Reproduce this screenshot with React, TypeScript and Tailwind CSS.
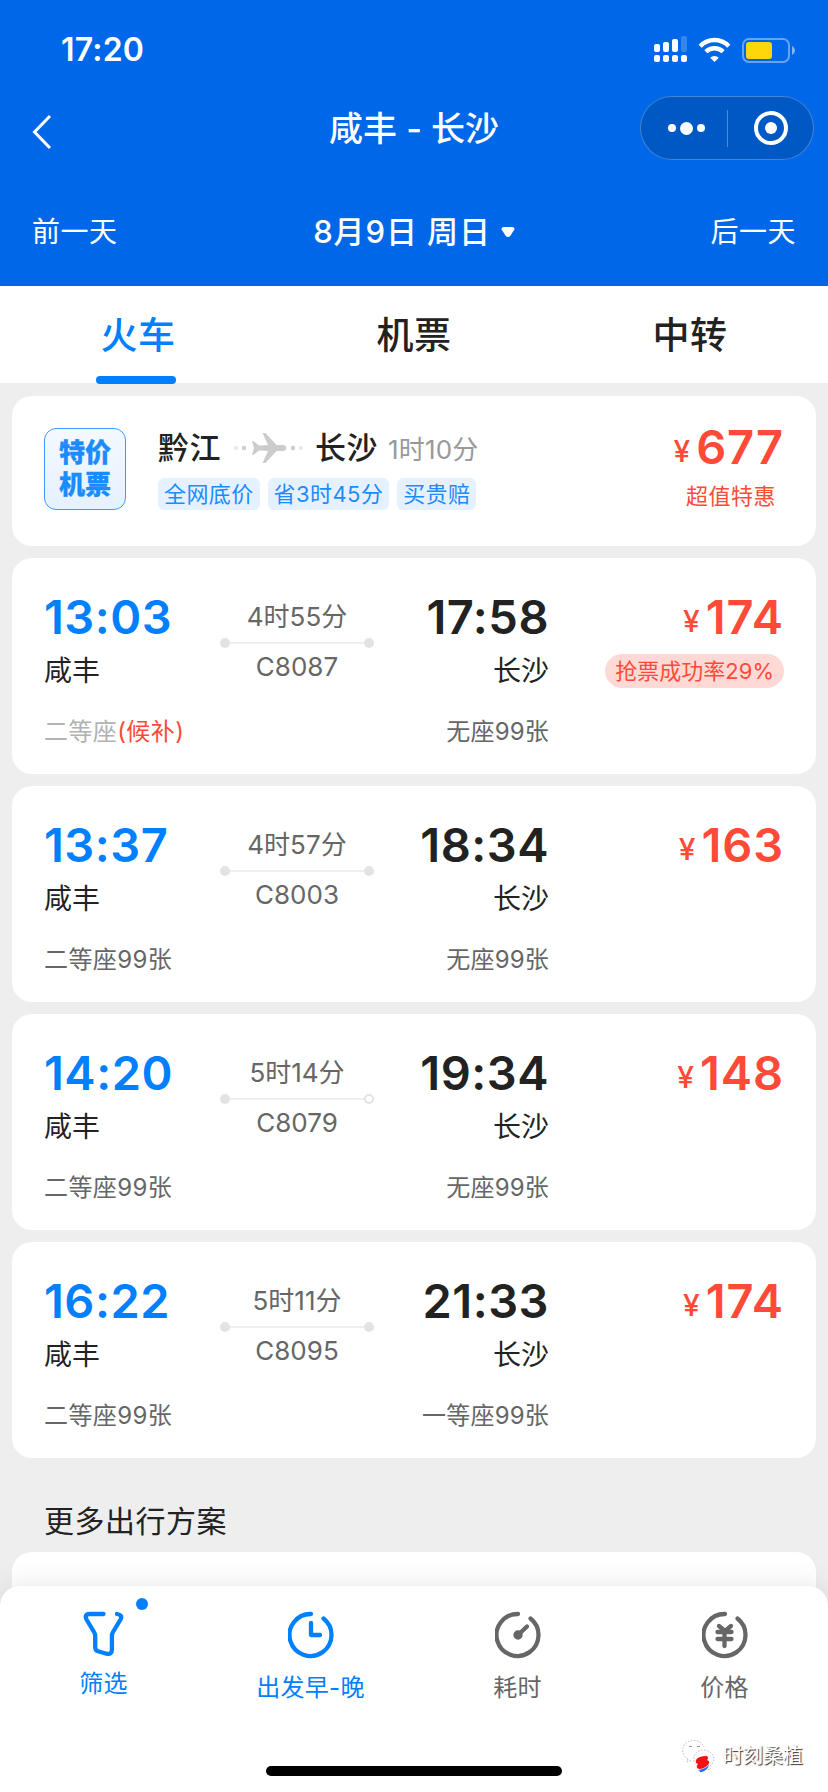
import { type ReactNode } from "react";
import clsx from "clsx";

type Train = {
  no: string;
  depart: string;
  arrive: string;
  from: string;
  to: string;
  duration: string;
  price: number;
  seat: ReactNode;
  extraSeat: string;
  successRate?: string;
  passing?: boolean;
};

const trains: Train[] = [
  {
    no: "C8087",
    depart: "13:03",
    arrive: "17:58",
    from: "咸丰",
    to: "长沙",
    duration: "4时55分",
    price: 174,
    seat: (
      <>
        <span className="text-[#b2b2b2]">二等座</span>
        <span className="text-[#ff4a38]">(候补)</span>
      </>
    ),
    extraSeat: "无座99张",
    successRate: "抢票成功率29%",
  },
  {
    no: "C8003",
    depart: "13:37",
    arrive: "18:34",
    from: "咸丰",
    to: "长沙",
    duration: "4时57分",
    price: 163,
    seat: "二等座99张",
    extraSeat: "无座99张",
  },
  {
    no: "C8079",
    depart: "14:20",
    arrive: "19:34",
    from: "咸丰",
    to: "长沙",
    duration: "5时14分",
    price: 148,
    seat: "二等座99张",
    extraSeat: "无座99张",
    passing: true,
  },
  {
    no: "C8095",
    depart: "16:22",
    arrive: "21:33",
    from: "咸丰",
    to: "长沙",
    duration: "5时11分",
    price: 174,
    seat: "二等座99张",
    extraSeat: "一等座99张",
  },
];

const tags = ["全网底价", "省3时45分", "买贵赔"];

function StatusIcons() {
  return (
    <svg width="144" height="30" viewBox="0 0 144 30" fill="#fff">
      {/* dual sim signal */}
      <rect x="1" y="9" width="6" height="8" rx="2" />
      <rect x="10" y="7" width="6" height="10" rx="2" />
      <rect x="19" y="4" width="6" height="13" rx="2" />
      <rect x="28" y="1" width="6" height="16" rx="2" fillOpacity="0.2" />
      <rect x="1" y="20" width="6" height="7" rx="2" />
      <rect x="10" y="20" width="6" height="7" rx="2" />
      <rect x="19" y="20" width="6" height="7" rx="2" />
      <rect x="28" y="20" width="6" height="7" rx="2" />
      {/* wifi */}
      <g fill="none" stroke="#fff" strokeWidth="4.4">
        <path d="M47.2 11.2a19.6 19.6 0 0 1 28.6 0" />
        <path d="M52.9 16.8a12.2 12.2 0 0 1 17.2 0" />
      </g>
      <path d="M61.5 27l-4.3-4.3a6.2 6.2 0 0 1 8.6 0z" />
      {/* battery */}
      <rect
        x="90"
        y="4"
        width="46"
        height="23"
        rx="6"
        fill="none"
        stroke="#fff"
        strokeOpacity="0.4"
        strokeWidth="2"
      />
      <rect x="93" y="7" width="26" height="17" rx="3" fill="#ffd60a" />
      <path d="M139 11c4 2 4 7 0 9z" fillOpacity="0.5" />
    </svg>
  );
}

function Header() {
  return (
    <header className="flex h-[286px] flex-col bg-[#0068e8] text-white">
      <div className="flex h-[96px] items-center justify-between pt-1 pr-[31px] pl-[61px]">
        <span className="text-[32px] font-semibold tracking-[0.2px]">
          17:20
        </span>
        <StatusIcons />
      </div>
      <div className="grid h-16 grid-cols-3 items-center">
        <svg className="mt-[7px] ml-8" width="22" height="36" fill="none">
          <path d="M18 2 2.5 18 18 34" stroke="#fff" strokeWidth="3" />
        </svg>
        <h1 className="mt-[2px] text-center text-[34px] leading-none font-medium whitespace-nowrap">
          咸丰 - 长沙
        </h1>
        <div className="mr-[14px] flex h-16 w-[174px] items-center justify-self-end rounded-full border border-white/25 bg-[#0058c5]">
          <div className="flex w-[86px] items-center justify-center gap-1 pl-1">
            <i className="size-2 rounded-full bg-white" />
            <i className="size-[13px] rounded-full bg-white" />
            <i className="size-2 rounded-full bg-white" />
          </div>
          <div className="h-[37px] w-px bg-white/30" />
          <div className="flex flex-1 justify-center">
            <div className="flex size-[34px] items-center justify-center rounded-full border-4 border-white">
              <i className="size-3 rounded-full bg-white" />
            </div>
          </div>
        </div>
      </div>
      <div className="grid flex-1 grid-cols-3 items-center px-8 pt-[18px] text-[28px]">
        <span className="tracking-[0.5px]">前一天</span>
        <span className="flex items-center justify-center gap-[10px] text-[31px] font-medium tracking-[0.9px] whitespace-nowrap">
          8月9日 周日
          <svg width="14" height="12" fill="#fff">
            <path d="M3 1h8q3 0 2.4 2.500L9.500 9.500Q7 12.500 4.500 9.500L.6 3.500Q0 1 3 1z" />
          </svg>
        </span>
        <span className="text-right tracking-[0.5px]">后一天</span>
      </div>
    </header>
  );
}

function Tabs() {
  return (
    <nav className="grid h-[97px] grid-cols-3 bg-white text-[37px] font-medium tracking-[0.5px] text-[#222]">
      {["火车", "机票", "中转"].map((tab, i) => (
        <div key={tab} className="flex flex-col items-center">
          <span
            className={clsx(
              "flex h-[90px] shrink-0 items-center pt-[10px]",
              i === 0 && "text-[#0080ff]"
            )}
          >
            {tab}
          </span>
          {i === 0 && (
            <div className="mr-1 h-2 w-20 shrink-0 rounded-full bg-[#0080ff]" />
          )}
        </div>
      ))}
    </nav>
  );
}

function Price({ value }: { value: number }) {
  return (
    <div className="flex items-baseline gap-[6px] text-[#ff4a38]">
      <span className="-translate-y-[2px] text-[30px] leading-none font-medium">
        ¥
      </span>
      <span className="text-[47px] leading-none font-semibold tracking-[0.9px]">
        {value}
      </span>
    </div>
  );
}

function Plane() {
  return (
    <svg width="70" height="32" viewBox="0 0 70 32" fill="#ccc">
      <circle cx="3" cy="16" r="2" fill="#e8e8e8" />
      <circle cx="11" cy="16" r="2.200" />
      <path d="M19 9h1.500l5.500 4.600 9-.6L29.500 1h3L43.500 13H50a3 3 0 0 1 0 6h-6.500L32.500 31h-3L35 19l-9-.6L20.500 23H19l2-7z" />
      <circle cx="60" cy="16" r="2.200" />
      <circle cx="68" cy="16" r="2" fill="#e8e8e8" />
    </svg>
  );
}

function FlightCard() {
  return (
    <section className="flex h-[150px] rounded-[20px] bg-white px-8">
      <div className="mt-8 flex size-[82px] flex-col items-center justify-center rounded-[12px] border border-[#3d9bff] bg-linear-to-b from-[#f4f9ff] to-[#e6f1ff] text-[26px] leading-8 font-black text-[#1a8cff] [-webkit-text-stroke:0.3px]">
        <span>特价</span>
        <span>机票</span>
      </div>
      <div className="ml-8 flex-1 pt-8">
        <div className="flex h-10 items-center text-[31px] leading-10 font-medium tracking-[0.5px] text-[#222]">
          黔江
          <span className="mx-3">
            <Plane />
          </span>
          长沙
          <span className="mt-[3px] ml-[10px] text-[26px] font-normal tracking-[0.2px] text-[#999]">
            1时10分
          </span>
        </div>
        <div className="mt-[10px] flex gap-2">
          {tags.map((tag) => (
            <span
              key={tag}
              className="flex h-8 items-center rounded-md bg-[#e6f1ff] px-[6px] text-[22px] tracking-[0.4px] text-[#1a8cff]"
            >
              {tag}
            </span>
          ))}
        </div>
      </div>
      <div className="flex flex-col items-end pt-[27px]">
        <Price value={677} />
        <span className="mt-[10px] mr-2 text-[22px] tracking-[0.5px] text-[#ff4a38]">
          超值特惠
        </span>
      </div>
    </section>
  );
}

function TrainCard({ train }: { train: Train }) {
  return (
    <section className="flex h-[216px] rounded-[20px] bg-white px-8 pt-[35px] text-[#222]">
      <div className="w-[176px]">
        <div className="h-[48px] text-[47px] leading-[48px] font-semibold tracking-[0.5px] text-[#0080ff]">
          {train.depart}
        </div>
        <div className="mt-[10px] h-10 text-[28px] leading-10">
          {train.from}
        </div>
        <div className="mt-[23px] text-[24px] leading-9 tracking-[0.4px] whitespace-nowrap text-[#666]">
          {train.seat}
        </div>
      </div>
      <div className="flex w-[154px] flex-col items-center pt-[5px] text-[26px] text-[#666]">
        <span className="h-10 leading-[38px]">{train.duration}</span>
        <div className="flex w-full items-center">
          <i className="size-[10px] rounded-full bg-[#e3e3e3]" />
          <i className="h-[2px] flex-1 bg-[#eee]" />
          <i
            className={clsx(
              "size-[10px] rounded-full",
              train.passing
                ? "border-2 border-[#e3e3e3] bg-white"
                : "bg-[#e3e3e3]"
            )}
          />
        </div>
        <span className="leading-[38px]">{train.no}</span>
      </div>
      <div className="flex w-[175px] flex-col items-end">
        <div className="h-[48px] text-[47px] leading-[48px] font-semibold tracking-[0.5px]">
          {train.arrive}
        </div>
        <div className="mt-[10px] h-10 text-[28px] leading-10">{train.to}</div>
        <div className="mt-[23px] text-[24px] leading-9 tracking-[0.2px] text-[#666]">
          {train.extraSeat}
        </div>
      </div>
      <div className="flex flex-1 flex-col items-end">
        <Price value={train.price} />
        {train.successRate && (
          <span className="mt-[14px] flex h-[34px] items-center rounded-full bg-[#ffd9d6] px-[10px] text-[22px] whitespace-nowrap text-[#ff4a38]">
            {train.successRate}
          </span>
        )}
      </div>
    </section>
  );
}

function FilterIcon() {
  return (
    <path d="M22.500 3H9Q3 3 5.500 8.500L13 21Q14.200 23 14.200 25V36Q14.200 39.500 17 40.300L25.500 42.700Q30.900 44 30.900 38.500V25Q30.900 23 32 21L39.500 8.500Q42 4 36 3" />
  );
}

function Ring({ children }: { children: ReactNode }) {
  return (
    <>
      <path d="M23 3A21 21 0 1 0 35.500 7.500" />
      {children}
    </>
  );
}

const actions = [
  { label: "筛选", active: true, dot: true, icon: <FilterIcon /> },
  {
    label: "出发早-晚",
    active: true,
    icon: (
      <Ring>
        <path d="M23 12V24H32" />
      </Ring>
    ),
  },
  {
    label: "耗时",
    icon: (
      <Ring>
        <path d="M23 24L32 15.500" />
        <circle cx="23" cy="24" r="2.500" />
      </Ring>
    ),
  },
  {
    label: "价格",
    icon: (
      <Ring>
        <path d="M17 15L23 20L29 15M15.500 21H29.500M15.500 28H29.500M22.500 20V35" />
      </Ring>
    ),
  },
];

function BottomBar() {
  return (
    <footer className="relative -mt-[34px] flex h-[206px] flex-col rounded-t-[20px] bg-white shadow-[0_0_30px_rgba(0,0,0,0.1)]">
      <div className="grid grid-cols-4 pt-[25px] text-[24px] tracking-[0.3px]">
        {actions.map((action) => (
          <div
            key={action.label}
            className={clsx(
              "relative flex flex-col items-center",
              action.active ? "text-[#0080ff]" : "text-[#666]"
            )}
          >
            <svg
              width="46"
              height="48"
              viewBox="0 0 46 48"
              fill="none"
              stroke="currentColor"
              strokeWidth="4.300"
              strokeLinecap="round"
              strokeLinejoin="round"
            >
              {action.icon}
            </svg>
            <span
              className={clsx(
                "leading-9",
                action.dot ? "mt-[7px]" : "mt-[11px]"
              )}
            >
              {action.label}
            </span>
            {action.dot && (
              <i className="absolute -top-[13px] left-[136px] size-3 rounded-full bg-[#0080ff]" />
            )}
          </div>
        ))}
      </div>
      <div className="absolute bottom-4 left-[266px] h-[10px] w-[296px] rounded-full bg-black" />
      <Watermark />
    </footer>
  );
}

function Watermark() {
  return (
    <div className="absolute right-[25px] bottom-[18px] flex items-center gap-2">
      <svg width="34" height="34" fill="#fff" stroke="#aaa" strokeWidth="0.800">
        <path
          strokeDasharray="1.500 1.500"
          d="M7 20A11 10 0 1 1 23 8M7 20l-1 3 5-2"
        />
        <path strokeDasharray="1.500 1.500" d="M29 27a10 9 0 1 0-6 2l6 2z" />
        <path d="M8 7.500h3M16 7.500h3" stroke="#777" />
        <path
          d="M26 17q-9 0-11 4-1 3 2 4-3 4 1 5 5 0 9-4 3-4-1-5 2-2 0-4z"
          fill="#f01414"
          stroke="none"
        />
        <path
          d="M17 31q7-1 11-5-1 5-7 7-3 1-2-1z"
          fill="#2f6df0"
          stroke="none"
        />
      </svg>
      <span className="text-[20px] leading-9 text-white [text-shadow:1px_1px_1px_#333]">
        时刻桑植
      </span>
    </div>
  );
}

export default function App() {
  return (
    <div className="h-[1792px] w-[828px] overflow-hidden bg-[#eee] font-[Inter,'Noto_Sans_CJK_SC',sans-serif]">
      <Header />
      <Tabs />
      <main className="flex flex-col gap-3 px-3 pt-[13px]">
        <FlightCard />
        {trains.map((train) => (
          <TrainCard key={train.no} train={train} />
        ))}
        <h2 className="mt-[31px] mb-[-1px] h-10 px-8 text-[30px] leading-10 tracking-[0.5px] text-[#222]">
          更多出行方案
        </h2>
        <div className="h-[68px] rounded-t-[20px] bg-white" />
      </main>
      <BottomBar />
    </div>
  );
}
